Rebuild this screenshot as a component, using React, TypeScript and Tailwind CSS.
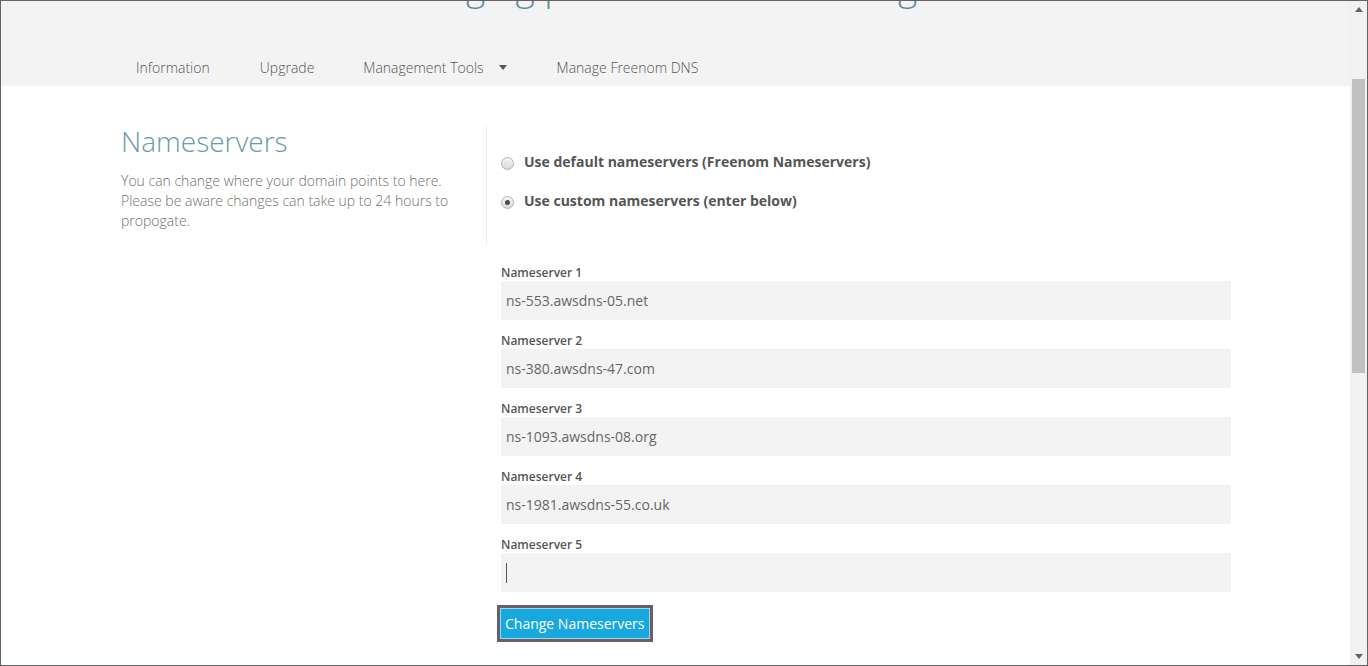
const servers = [
  'ns-553.awsdns-05.net',
  'ns-380.awsdns-47.com',
  'ns-1093.awsdns-08.org',
  'ns-1981.awsdns-55.co.uk',
  '',
]

function Radio({ checked }: { checked?: boolean }) {
  return (
    <span className="mt-[6px] flex h-[13px] w-[13px] shrink-0 items-center justify-center rounded-full border border-[#b5b5b5] bg-gradient-to-b from-[#f4f4f4] to-[#d8d8d8]">
      {checked && <span className="h-[5px] w-[5px] rounded-full bg-[#4a4a4a]" />}
    </span>
  )
}

function Scrollbar() {
  return (
    <div className="flex w-[17px] shrink-0 flex-col items-center bg-[#f1f1f1]">
      <div className="flex h-[17px] w-full items-center justify-center">
        <svg width="8" height="5" viewBox="0 0 8 5">
          <path d="M0 5 L4 0 L8 5 Z" fill="#6b5f63" />
        </svg>
      </div>
      <div className="h-[61px]" />
      <div className="h-[294px] w-[13px] bg-[#c1c1c1]" />
      <div className="flex-1" />
      <div className="flex h-[17px] w-full items-center justify-center">
        <svg width="8" height="5" viewBox="0 0 8 5">
          <path d="M0 0 L8 0 L4 5 Z" fill="#6b5f63" />
        </svg>
      </div>
    </div>
  )
}

export default function App() {
  return (
    <div
      className="flex h-[666px] w-[1368px] overflow-hidden border border-[#6b5f63] bg-white"
      style={{ fontFamily: '"Open Sans", "Liberation Sans", sans-serif' }}
    >
      <div className="flex flex-1 flex-col overflow-hidden">
        <header className="h-[85px] shrink-0 overflow-hidden bg-[#f3f3f3]">
          <div className="-mt-[39px] h-[48px] pl-[372px] text-[37px] leading-[48px] font-light whitespace-nowrap text-[#5f8f9c]">
            Managing pmuserdashboard.org
          </div>
          <nav className="mt-[41px] flex items-center pl-[120px] text-[14px] font-light text-[#555]">
            <a className="px-[15px] py-[6px]">Information</a>
            <a className="ml-[20px] px-[15px] py-[6px]">Upgrade</a>
            <a className="ml-[19px] flex items-center gap-[15px] px-[15px] py-[6px]">
              Management Tools
              <svg width="8" height="5" viewBox="0 0 8 5">
                <path d="M0 0 L8 0 L4 5 Z" fill="#555" />
              </svg>
            </a>
            <a className="ml-[20px] px-[15px] py-[6px]">Manage Freenom DNS</a>
          </nav>
        </header>

        <main className="flex pl-[120px]">
          <section className="w-[365px] shrink-0 pt-[37px]">
            <h1 className="text-[28px] leading-[36px] font-light text-[#6a9ba8]">Nameservers</h1>
            <p className="mt-[12px] text-[14px] leading-[20px] font-light text-[#707070]">
              You can change where your domain points to here.
              <br />
              Please be aware changes can take up to 24 hours to
              <br />
              propogate.
            </p>
          </section>

          <section className="w-[746px] shrink-0">
            <div className="mt-[39px] h-[120px] border-l border-[#eeeeee] pt-[26px] pl-[14px]">
              <label className="flex gap-[10px] text-[14px] leading-[22px] font-bold text-[#555]">
                <Radio />
                Use default nameservers (Freenom Nameservers)
              </label>
              <label className="mt-[17px] flex gap-[10px] text-[14px] leading-[22px] font-bold text-[#555]">
                <Radio checked />
                Use custom nameservers (enter below)
              </label>
            </div>

            <form className="mt-[15px] pl-[15px]">
              {servers.map((s, i) => (
                <div key={i} className="mb-[8px]">
                  <div className="h-[21px] pt-[6px] text-[12px] leading-[14px] font-semibold text-[#555]">
                    Nameserver {i + 1}
                  </div>
                  <div className="flex h-[39px] w-[730px] items-center bg-[#f3f3f3] px-[5px] text-[14px] text-[#666]">
                    {s || <span className="h-[20px] w-px bg-[#555]" />}
                  </div>
                </div>
              ))}
              <div className="mt-[5px] -ml-[4px] inline-block border-[3px] border-[#6b5f63]">
                <button
                  type="button"
                  className="h-[31px] border border-[#9bd6ee] bg-[#17a8e0] px-[4px] text-[14px] leading-[28px] text-white"
                >
                  Change Nameservers
                </button>
              </div>
            </form>
          </section>
        </main>
      </div>
      <Scrollbar />
    </div>
  )
}
